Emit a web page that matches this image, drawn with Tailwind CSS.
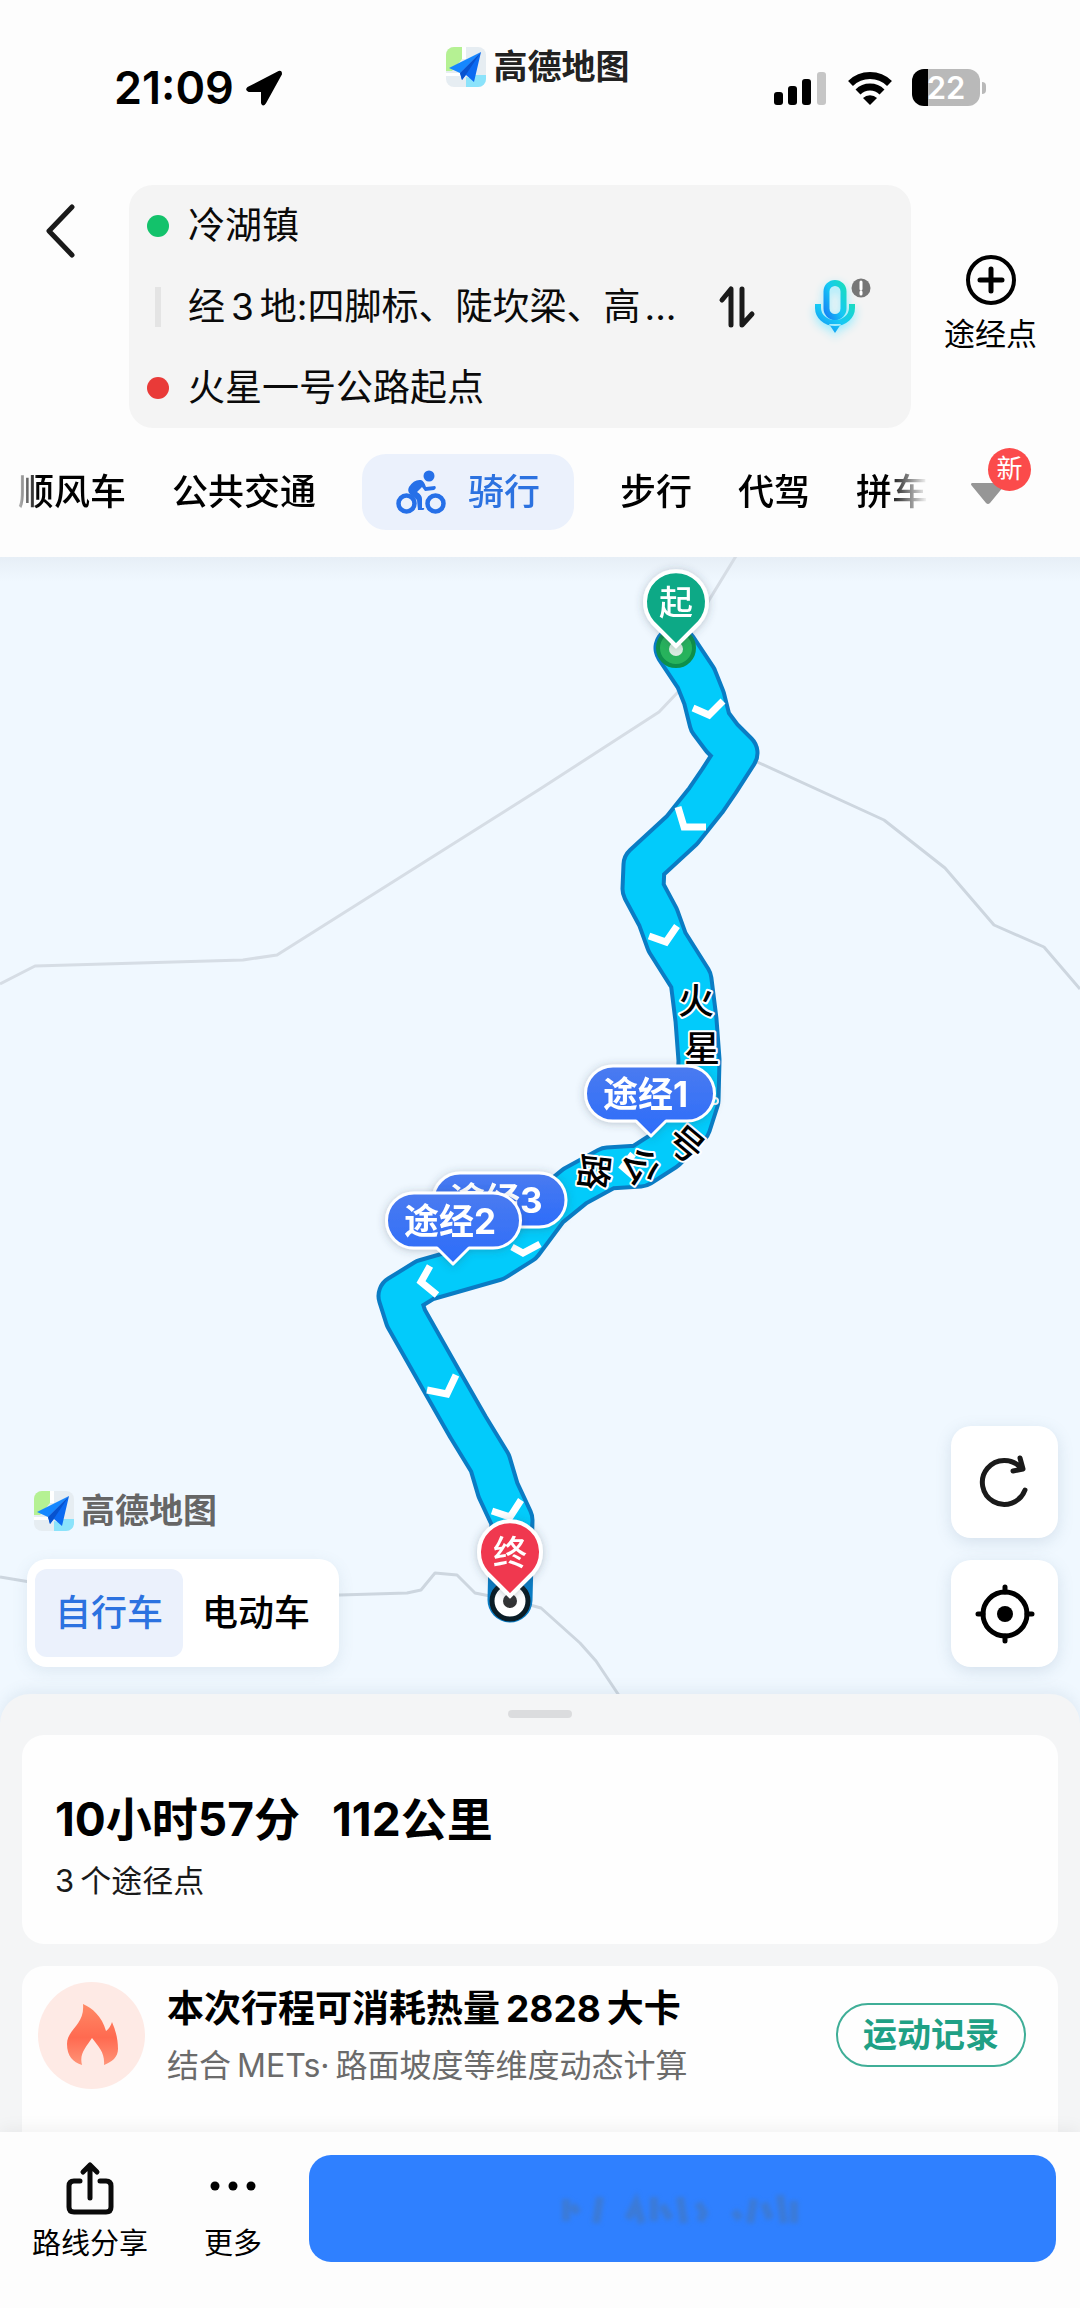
<!DOCTYPE html>
<html lang="zh-CN">
<head>
<meta charset="utf-8">
<meta name="viewport" content="width=device-width, initial-scale=1">
<title>高德地图</title>
<script src="https://cdn.jsdelivr.net/npm/@tailwindcss/browser@4"></script>
</head>
<body class="flex min-h-screen flex-col bg-[#fdfdfd] font-[Inter,'Noto_Sans_CJK_SC',sans-serif] text-black">

<svg class="hidden" aria-hidden="true">
  <symbol id="amap" viewBox="0 0 40 40">
    <rect width="40" height="40" rx="8" fill="#e6edf2"/>
    <path d="M8 0h8v12L6 24H0V8a8 8 0 0 1 8-8z" fill="#b5f193"/>
    <path d="M20 40V30l8 2v-4h12v4a8 8 0 0 1-8 8z" fill="#8be3fb"/>
    <path d="M16 0h4v12h-4zM0 26h18v3H0z" fill="#fff"/>
    <path d="M35 5 3 21l11 5z" fill="#1687ff"/>
    <path d="M35 5 14 26l2 7 4-5 8 7z" fill="#0b6af2"/>
    <path d="M35 5 14 26l2 7 5-7z" fill="#0752cf"/>
  </symbol>
</svg>

<header class="relative z-10 bg-[#fdfdfd] pb-[27px]">
  <div class="flex h-[185px] items-start justify-between pr-[94px] pl-[114px]">
    <div class="flex items-center gap-3 pt-[60px]">
      <time class="text-[45px] leading-[56px] font-semibold">21:09</time>
      <svg class="size-9" viewBox="0 0 36 36" aria-hidden="true"><path d="M33 2 2 18q-2 2 1 3h13v12q1 3 3 0L35 4q0-3-2-2z" stroke="#000" stroke-width="2" stroke-linejoin="round"/></svg>
    </div>
    <div class="flex items-center gap-[7px] pt-[43px] pl-5">
      <svg class="size-10" aria-hidden="true"><use href="#amap"/></svg>
      <span class="text-[34px] leading-[48px] font-bold text-[#222]">高德地图</span>
    </div>
    <div class="flex items-center gap-5 pt-[69px]">
      <svg class="h-9 w-[54px]" viewBox="0 0 54 36" aria-label="信号"><rect y="22" width="9" height="13" rx="3"/><rect x="14" y="16" width="9" height="19" rx="3"/><rect x="28" y="9" width="9" height="26" rx="3"/><rect x="43" y="2" width="9" height="33" rx="3" fill="#c6c6c6"/></svg>
      <svg class="h-9 w-11" viewBox="0 0 44 36" aria-label="无线网络"><g fill="none" stroke="#000" stroke-width="7"><path d="M2.500 13.500a28 28 0 0 1 39 0"/><path d="M10 22a17 17 0 0 1 24 0"/></g><path d="m22 35-7-7a10 10 0 0 1 14 0z"/></svg>
      <div class="flex items-center gap-0.5">
        <span class="h-[37px] w-[68px] rounded-xl bg-linear-to-r from-black from-24% to-[#b9b9b9] to-24% text-center text-[31px] leading-[37px] font-semibold text-white">22</span>
        <span class="h-3 w-1 rounded-r-full bg-[#b9b9b9]"></span>
      </div>
    </div>
  </div>

  <div class="flex items-start">
    <button class="mt-4 ml-11 flex h-[60px] w-[85px] items-center" aria-label="返回">
      <svg class="h-14 w-8" viewBox="0 0 32 56" fill="none" stroke="#1a1a1a" stroke-width="5" stroke-linecap="round" stroke-linejoin="round"><path d="M28 4 5 28l23 24"/></svg>
    </button>
    <div class="flex min-w-0 flex-1 items-center rounded-3xl bg-[#f4f4f4] pr-[54px] pl-[18px] text-[37px] leading-[81px] text-[#0a0a0a]">
      <div class="min-w-0 flex-1">
        <div class="flex items-center gap-[19px]"><i class="size-[22px] rounded-full bg-[#13c26b]"></i>冷湖镇</div>
        <div class="flex items-center gap-[19px]"><i class="mx-2 h-10 w-1.5 bg-[#e4e4e4]"></i><span class="whitespace-nowrap">经<span class="mx-1.5">3</span>地:四脚标、陡坎梁、高<span class="ml-1">...</span></span></div>
        <div class="flex items-center gap-[19px]"><i class="size-[22px] rounded-full bg-[#e93a38]"></i>火星一号公路起点</div>
      </div>
      <button class="mr-14" aria-label="交换起终点">
        <svg class="h-11 w-10" viewBox="0 0 40 44" fill="none" stroke="#1a1a1a" stroke-width="5" stroke-linecap="round" stroke-linejoin="round"><path d="M5 15 14 4v36M25 4v36L35 29"/></svg>
      </button>
      <button class="relative" aria-label="语音输入">
        <svg class="h-[54px] w-11 drop-shadow-[0_4px_5px_#8ceaff]" viewBox="0 0 44 54" fill="none"><defs><linearGradient id="mic" x1="0" y1="1" x2="1" y2="0"><stop stop-color="#1683f5"/><stop offset=".5" stop-color="#16c8f5"/><stop offset="1" stop-color="#19dcc0"/></linearGradient></defs><rect x="13.500" y="3" width="17" height="34" rx="8.500" stroke="url(#mic)" stroke-width="6"/><path d="M2 24v4a20 18 0 0 0 40 0v-4h-6v4a14 12 0 0 1-28 0v-4zM16 44h12l-6 9z" fill="url(#mic)"/></svg>
        <svg class="absolute -top-0.5 -right-3.5 size-5" viewBox="0 0 20 20"><circle cx="10" cy="10" r="9.500" fill="#777"/><path d="M10 4v7M10 14v2" stroke="#fff" stroke-width="3" stroke-linecap="round"/></svg>
      </button>
    </div>
    <button class="mt-[69px] flex w-[169px] flex-col items-center gap-2 pr-2.5">
      <svg class="size-[52px]" viewBox="0 0 52 52" fill="none" stroke="#000" stroke-width="4" stroke-linecap="round"><circle cx="26" cy="26" r="23"/><path d="M26 15v22M15 26h22" stroke-width="5"/></svg>
      <span class="text-[31px] leading-[40px]">途经点</span>
    </button>
  </div>

  <nav class="mt-[26px] flex items-center text-[36px] leading-[76px] font-medium whitespace-nowrap">
    <div class="flex min-w-0 flex-1 items-center gap-[46px] overflow-hidden pl-[18px] [mask-image:linear-gradient(90deg,transparent_12px,#000_38px,#000_calc(100%-40px),transparent)]">
      <a href="#">顺风车</a>
      <a href="#">公共交通</a>
      <a href="#" aria-current="page" class="flex items-center gap-[22px] rounded-3xl bg-[#ebf1fc] px-[34px] text-[#2c72e0]">
        <svg class="h-11 w-[50px]" viewBox="0 0 50 44" fill="none" stroke="#2670e8" aria-hidden="true"><circle cx="10.500" cy="33.500" r="8" stroke-width="4.500"/><circle cx="39.500" cy="33.500" r="8" stroke-width="4.500"/><circle cx="33" cy="6" r="5.500" fill="#2670e8" stroke="none"/><path d="M13 17q5-8 12-7 3 1 5 7l9-1q2 2-1 4l-9 1-3-4-5 5q5 3 5 7v9h2q1 1-1 2h-5l-1-10-7-6q-3-3-1-7z" fill="#2670e8" stroke="none"/></svg>
        骑行
      </a>
      <a href="#">步行</a>
      <a href="#">代驾</a>
      <a href="#">拼车</a>
    </div>
    <button class="relative h-[76px] w-[152px]" aria-label="更多出行方式">
      <svg class="absolute top-7 left-[42px] h-6 w-9" viewBox="0 0 36 24"><path d="M2 1h32q2 1 0 3L20 21q-2 2-4 0L2 4Q0 2 2 1z" fill="#969696"/></svg>
      <span class="absolute -top-1.5 left-[60px] size-[43px] rounded-full bg-[#fb4b4b] text-center text-[26px] leading-[42px] font-normal text-white">新</span>
    </button>
  </nav>
</header>

<main class="relative min-h-[700px] flex-1 overflow-hidden bg-[#f0f8ff]">
  <svg class="absolute inset-0 size-full" viewBox="0 556 1080 1169" preserveAspectRatio="xMidYMid slice" role="img" aria-label="骑行路线">
    <defs>
      <linearGradient id="pill" x1="0" y1="0" x2="0" y2="1"><stop stop-color="#4a7bf0"/><stop offset="1" stop-color="#2c6cfa"/></linearGradient>
      <linearGradient id="topshade" x1="0" y1="0" x2="0" y2="1"><stop stop-color="#e6eef6"/><stop offset="1" stop-color="#e6eef6" stop-opacity="0"/></linearGradient>
      <filter id="soft" x="-30%" y="-30%" width="160%" height="160%"><feDropShadow dx="0" dy="1" stdDeviation="4" flood-color="#34465a" flood-opacity=".3"/></filter>
    </defs>
    <rect y="556" width="1080" height="26" fill="url(#topshade)"/>
    <g fill="none" stroke="#cdd6df" stroke-width="3" stroke-linejoin="round">
      <path d="M736 556 700 615M678 692 659 712 540 789 277 955 243 960 35 966 0 984" stroke="#d6dde5"/>
      <path d="m755 761 129 59 61 48 49 57 50 22 36 42"/>
      <path d="m0 1577 30 5 310 13 67-2 14-3 14-17 22 2 18 18 20 4M530 1605l11 3 39 35 16 18 24 36"/>
    </g>
    <g fill="none" stroke-linejoin="round" stroke-linecap="round">
      <path d="M676 648 696 678 704 698 710 722 722 738 737 753 719 781 706 800 682 830 644 865 643 889 658 917 667 942 691 980 696 1020 699 1060 698 1100 690 1125 665 1150 640 1166 608 1168 575 1186 548 1208 522 1243 495 1260 425 1280 399 1296 406 1318 440 1378 468 1427 490 1463 498 1490 512 1520 510 1600" stroke="#0a7cc4" stroke-width="45"/>
      <path d="M676 648 696 678 704 698 710 722 722 738 737 753 719 781 706 800 682 830 644 865 643 889 658 917 667 942 691 980 696 1020 699 1060 698 1100 690 1125 665 1150 640 1166 608 1168 575 1186 548 1208 522 1243 495 1260 425 1280 399 1296 406 1318 440 1378 468 1427 490 1463 498 1490 512 1520 510 1545" stroke="#02cbfb" stroke-width="37"/>
    </g>
    <g fill="none" stroke="#fff" stroke-width="7">
      <path d="m693 708 16 7 14-14M678 807l6 20h22M649 936l17 6 11-16M512 1247l11 6 17-9M430 1266l-9 16 16 13M427 1390l20 4 9-19M492 1511l18 6 11-17M633 1154l-10 13 14 12"/>
    </g>
    <g font-size="36" font-weight="500" text-anchor="middle" stroke="#fff" stroke-width="4" stroke-linejoin="round" paint-order="stroke">
      <text transform="translate(696 1001)" y="13">火</text>
      <text transform="translate(702 1049)" y="13">星</text>
      <text transform="translate(686 1144) rotate(40)" y="13">号</text>
      <text transform="translate(641 1166) rotate(66)" y="13">公</text>
      <text transform="translate(594 1172) rotate(96)" y="13">路</text>
    </g>
    <circle cx="715" cy="1101" r="3" fill="#02cbfb" stroke="#fff" stroke-width="2"/>
    <g fill="url(#pill)" stroke="#fff" stroke-width="3" stroke-linejoin="round" font-size="35" font-weight="700">
      <g filter="url(#soft)"><path d="M613 1066h74a27 27 0 0 1 0 55h-21l-15 15-15-15h-23a27 27 0 0 1 0-55z"/><text x="603" y="1107" fill="#fff" stroke="none">途经1</text></g>
      <g filter="url(#soft)"><path d="M460 1173h79a27 27 0 0 1 0 54h-79a27 27 0 0 1 0-54z"/><text x="450" y="1213" fill="#fff" stroke="none">途经3</text></g>
      <g filter="url(#soft)"><path d="M414 1193h79a27 27 0 0 1 0 55h-24l-16 16-16-16h-23a27 27 0 0 1 0-55z"/><text x="404" y="1234" fill="#fff" stroke="none">途经2</text></g>
    </g>
    <circle cx="676" cy="648" r="18" fill="#27b35c" stroke="#0e8f4b" stroke-width="4"/><circle cx="676" cy="649" r="7" fill="#dcefe2"/>
    <circle cx="510" cy="1601" r="18" fill="#fff" stroke="#0b1d26" stroke-width="5"/><circle cx="510" cy="1601" r="7" fill="#333"/>
    <g stroke="#fff" stroke-width="4" font-size="34" font-weight="500" text-anchor="middle">
      <g filter="url(#soft)"><path d="M676 646 653 623a31 31 0 1 1 46 0z" fill="#0aa986"/><text x="676" y="615" fill="#fff" stroke="none">起</text></g>
      <g filter="url(#soft)"><path d="M510 1596 487 1573a31 31 0 1 1 46 0z" fill="#f0384f"/><text x="510" y="1565" fill="#fff" stroke="none">终</text></g>
    </g>
  </svg>

  <div class="absolute inset-x-0 bottom-[57px] flex items-end justify-between pr-[22px] pl-[27px]">
    <div>
      <div class="mb-6 flex items-center gap-[7px] pl-[7px]">
        <svg class="size-10" aria-hidden="true"><use href="#amap"/></svg>
        <span class="text-[34px] leading-[48px] font-bold text-[#666]">高德地图</span>
      </div>
      <div class="flex rounded-[20px] bg-white p-2.5 pl-2 text-[36px] leading-[88px] font-medium shadow-[0_4px_16px_#5a78961f]">
        <button class="w-[148px] rounded-xl bg-[#ebf1fc] text-[#2c72e0]">自行车</button>
        <button class="w-[146px]">电动车</button>
      </div>
    </div>
    <div class="flex flex-col gap-[22px]">
      <button class="flex h-28 w-[107px] items-center justify-center rounded-[20px] bg-white shadow-[0_4px_16px_#5a78962e]" aria-label="刷新路线">
        <svg class="size-[54px]" viewBox="0 0 54 54" fill="none" stroke="#1a1a1a" stroke-width="5" stroke-linecap="round" stroke-linejoin="round"><path d="M47 35A22 22 0 1 1 43 13M42 3l3 11-10 2"/></svg>
      </button>
      <button class="flex size-[107px] items-center justify-center rounded-[20px] bg-white shadow-[0_4px_16px_#5a78962e]" aria-label="定位">
        <svg class="size-[60px]" viewBox="0 0 60 60" fill="none" stroke="#000" stroke-width="5" stroke-linecap="round"><circle cx="30" cy="30" r="22"/><circle cx="30" cy="30" r="8" fill="#000" stroke="none"/><path d="M30 3v5M30 52v5M3 30h5M52 30h5"/></svg>
      </button>
    </div>
  </div>
</main>

<section class="relative z-10 -mt-[30px] rounded-t-[30px] bg-[#f4f5f6] px-[22px] pt-4 shadow-[0_-4px_14px_#5a78961a]">
  <div class="mx-auto h-2 w-16 rounded-sm bg-[#dbdcde]"></div>
  <div class="mt-[17px] rounded-[22px] bg-[#fefefe] px-[33px] pt-[55px] pb-[41px]">
    <h1 class="flex gap-8 text-[46px] leading-[58px] font-bold"><span>10小时57分</span><span>112公里</span></h1>
    <p class="mt-[11px] text-[31px] leading-[44px] text-[#1a1a1a]">3<span class="ml-1.5">个途径点</span></p>
  </div>
  <div class="mt-[22px] flex h-[166px] items-start rounded-t-[22px] bg-[#fefefe] pt-4 pr-8 pl-4">
    <svg class="size-[107px]" viewBox="0 0 107 107" aria-hidden="true"><defs><linearGradient id="fire" x1="0" y1="0" x2="0" y2="1"><stop stop-color="#ff8a66"/><stop offset=".55" stop-color="#ff6a50"/><stop offset="1" stop-color="#ff9478"/></linearGradient></defs><circle cx="53.500" cy="53.500" r="53.500" fill="#feeae5"/><path d="M45 22c9 4 19 12 23 27 3-2 5-6 6-9 4 9 6 18 6 27 0 8-6 13-14 16 1-12-5-18-12-27-6 9-13 16-10 27-9-3-15-9-15-21 0-15 18-19 16-40z" fill="url(#fire)"/></svg>
    <div class="ml-[22px] min-w-0 flex-1 whitespace-nowrap">
      <h2 class="text-[37px] leading-[54px] font-bold">本次行程可消耗热量<span class="mx-1.5">2828</span>大卡</h2>
      <p class="mt-1 text-[32px] leading-[52px] text-[#6b6b6b]">结合<span class="mx-1.5">METs·</span>路面坡度等维度动态计算</p>
    </div>
    <button class="mt-[21px] h-16 w-[190px] rounded-full border-2 border-[#3fae97] text-[34px] leading-[60px] font-bold text-[#1fa085]">运动记录</button>
  </div>
</section>

<footer class="relative z-20 flex items-start bg-[#fdfdfd] pt-[23px] pr-6 pb-11 pl-8 shadow-[0_-4px_16px_#0000000d]">
  <button class="flex flex-col items-center gap-[9px] pt-1.5">
    <svg class="h-[54px] w-[50px]" viewBox="0 0 50 54" fill="none" stroke="#0a0a0a" stroke-width="5" stroke-linecap="round" stroke-linejoin="round"><path d="M15 20H9q-5 0-5 5v21q0 5 5 5h32q5 0 5-5V25q0-5-5-5h-6M25 37V4M18 11l7-7 7 7"/></svg>
    <span class="text-[29px] leading-[40px]">路线分享</span>
  </button>
  <button class="ml-14 flex flex-col items-center gap-[9px] pt-1.5">
    <svg class="h-[54px] w-[50px]" viewBox="0 0 50 54"><circle cx="7" cy="25" r="4.500"/><circle cx="25" cy="25" r="4.500"/><circle cx="43" cy="25" r="4.500"/></svg>
    <span class="text-[29px] leading-[40px]">更多</span>
  </button>
  <button class="ml-[47px] flex h-[107px] flex-1 items-center justify-center rounded-[22px] bg-[#2f80ff]" aria-label="开始导航">
    <svg class="h-12 w-[250px] blur-[2px]" viewBox="0 0 250 48" fill="none" stroke="#4577bd" stroke-width="8" stroke-opacity=".6" aria-hidden="true"><path d="M8 14v22M14 20l6 8M42 12l-4 26M70 34l8-16 6 20M96 12v24M104 20l8 14M122 12l4 26M140 18l6 10-4 8M176 26l6 8M196 14l-4 24M206 18l6 16M222 10l4 28M236 16v22"/></svg>
  </button>
</footer>
</body>
</html>
